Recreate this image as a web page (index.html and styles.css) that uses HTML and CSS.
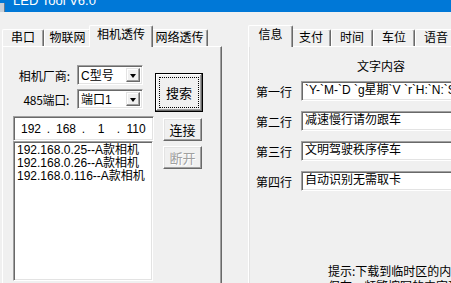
FILE: index.html
```html
<!DOCTYPE html>
<html>
<head>
<meta charset="utf-8">
<link rel="stylesheet" href="styles.css">
</head>
<body>
<div class="title">
  <span class="ticon"></span>
  <span class="ttext">LED Tool V6.0</span>
</div>
<div class="main">
  <div class="left">
    <div class="tabs">
      <div class="tab w42">串口</div>
      <div class="tab w47">物联网</div>
      <div class="tab sel w64">相机透传</div>
      <div class="tab w57">网络透传</div>
    </div>
    <div class="panel lpanel">
      <div class="lp-top">
        <div class="fields">
          <div class="frow">
            <span class="flabel">相机厂商:</span>
            <div class="combo sunken"><span class="cval">C型号</span><span class="cbtn"><span class="tri"></span></span></div>
          </div>
          <div class="frow">
            <span class="flabel">485端口:</span>
            <div class="combo sunken"><span class="cval">端口1</span><span class="cbtn"><span class="tri"></span></span></div>
          </div>
        </div>
        <div class="btn search"><span class="focus">搜索</span></div>
      </div>
      <div class="lp-mid">
        <div class="ip sunken">
          <span class="oct">192</span><span class="dot">.</span><span class="oct">168</span><span class="dot">.</span><span class="oct">1</span><span class="dot">.</span><span class="oct">110</span>
        </div>
        <div class="btn connect">连接</div>
      </div>
      <div class="lp-bot">
        <div class="list sunken">
          <div class="item">192.168.0.25--A款相机</div>
          <div class="item">192.168.0.26--A款相机</div>
          <div class="item">192.168.0.116--A款相机</div>
        </div>
        <div class="btn disconnect">断开</div>
      </div>
    </div>
  </div>
  <div class="right">
    <div class="tabs">
      <div class="tab sel w45">信息</div>
      <div class="tab w40">支付</div>
      <div class="tab w42">时间</div>
      <div class="tab w42">车位</div>
      <div class="tab w42">语音</div>
    </div>
    <div class="panel rpanel">
      <div class="rhead">文字内容</div>
      <div class="rrow"><span class="rlabel">第一行</span><div class="rinput sunken">`Y-`M-`D `g星期`V `r`H:`N:`S</div></div>
      <div class="rrow"><span class="rlabel">第二行</span><div class="rinput sunken">减速慢行请勿跟车</div></div>
      <div class="rrow"><span class="rlabel">第三行</span><div class="rinput sunken">文明驾驶秩序停车</div></div>
      <div class="rrow"><span class="rlabel">第四行</span><div class="rinput sunken">自动识别无需取卡</div></div>
      <div class="hint">提示:下载到临时区的内容不会保存，<br>保存，频繁擦写的内容建议</div>
    </div>
  </div>
</div>
</body>
</html>
```
FILE: styles.css
```css
* { box-sizing: border-box; }
html, body {
  margin: 0;
  padding: 0;
  width: 451px;
  height: 283px;
  overflow: hidden;
  background: #f0f0f0;
  font-family: "Liberation Sans", "Noto Sans CJK SC", sans-serif;
  font-size: 12px;
  color: #000;
}
.title {
  height: 12px;
  background: #0078d7;
  display: flex;
  align-items: flex-start;
  overflow: hidden;
}
.ticon {
  width: 5px;
  height: 9px;
  margin-top: 3px;
  background: #c8d0d8;
  border-right: 1px solid #6a7a8a;
}
.ttext {
  color: #fff;
  font-size: 13px;
  line-height: 15px;
  margin-top: -7px;
  margin-left: 8px;
}
.main {
  display: flex;
  align-items: flex-start;
}
.left {
  width: 222px;
  padding-left: 2px;
  padding-top: 13px;
  flex: none;
}
.right {
  margin-left: 26px;
  padding-top: 13px;
  width: 240px;
  flex: none;
}
.tabs {
  display: flex;
  height: 21px;
  align-items: flex-start;
  position: relative;
  z-index: 2;
}
.tab {
  height: 17px;
  margin-top: 4px;
  border-top: 1px solid #fff;
  border-left: 1px solid #fff;
  border-right: 1px solid #696969;
  box-shadow: inset -1px 0 #a0a0a0;
  border-radius: 2px 2px 0 0;
  text-align: center;
  line-height: 16px;
  flex: none;
  background: #f0f0f0;
}
.tab.sel {
  height: 22px;
  margin-top: 0;
  line-height: 19px;
  margin-left: -2px;
  margin-right: -2px;
  position: relative;
  z-index: 3;
}
.tabs .tab.sel:first-child { margin-left: 0; }
.w40 { width: 40px; }
.w42 { width: 42px; }
.w45 { width: 45px; }
.w47 { width: 47px; }
.w57 { width: 57px; }
.w64 { width: 64px; }
.panel {
  border-top: 1px solid #fff;
  border-left: 1px solid #fff;
  border-right: 1px solid #696969;
  box-shadow: inset -1px 0 #a0a0a0;
  position: relative;
  z-index: 1;
}
.lpanel {
  width: 220px;
  height: 240px;
  padding: 18px 0 0 10px;
}
.sunken {
  background: #fff;
  border: 1px solid;
  border-color: #a0a0a0 #fff #fff #a0a0a0;
  box-shadow: inset 1px 1px #696969, inset -1px -1px #e3e3e3;
}
.btn {
  background: #f0f0f0;
  border: 1px solid;
  border-color: #fff #696969 #696969 #fff;
  box-shadow: inset -1px -1px #a0a0a0, inset 1px 1px #e3e3e3;
  display: flex;
  align-items: center;
  justify-content: center;
  flex: none;
  font-family: "Noto Sans CJK SC", sans-serif;
}
.lp-top {
  display: flex;
  height: 47px;
}
.fields {
  width: 142px;
  display: flex;
  flex-direction: column;
  gap: 4px;
}
.frow {
  display: flex;
  align-items: center;
  height: 20px;
}
.flabel {
  width: 64px;
  text-align: right;
  padding-right: 7px;
  font-family: "Noto Sans CJK SC", sans-serif;
  white-space: nowrap;
}
.frow:nth-child(2) .flabel { padding-right: 8px; letter-spacing: -0.3px; }
.combo {
  width: 66px;
  height: 20px;
  display: flex;
  align-items: stretch;
  padding: 2px;
}
.cval {
  flex: 1;
  line-height: 16px;
  padding-left: 1px;
  font-family: "Liberation Sans", "Noto Sans CJK SC", sans-serif;
}
.cbtn {
  width: 14px;
  background: #f0f0f0;
  border: 1px solid;
  border-color: #e3e3e3 #696969 #696969 #e3e3e3;
  box-shadow: inset -1px -1px #a0a0a0, inset 1px 1px #fff;
  display: flex;
  align-items: center;
  justify-content: center;
}
.tri {
  width: 0;
  height: 0;
  border-left: 3.5px solid transparent;
  border-right: 3.5px solid transparent;
  border-top: 4px solid #000;
  margin-top: 1px;
}
.search {
  width: 48px;
  height: 39px;
  margin-top: 8px;
  border: 1px solid #000;
  box-shadow: inset -1px -1px #696969, inset 1px 1px #fff, inset -2px -2px #a0a0a0;
  padding: 3px;
  font-size: 13px;
}
.focus {
  width: 100%;
  height: 100%;
  border: 1px dotted #000;
  display: flex;
  align-items: center;
  justify-content: center;
}
.lp-mid {
  display: flex;
  margin-top: 4px;
}
.ip {
  width: 141px;
  height: 25px;
  display: flex;
  align-items: center;
  padding-left: 6px;
  font-family: "Liberation Sans", sans-serif;
}
.oct { width: 22px; text-align: center; }
.dot { width: 13px; text-align: center; }
.connect {
  width: 39px;
  height: 23px;
  margin-left: 9px;
  margin-top: 2px;
  font-size: 13px;
}
.lp-bot {
  display: flex;
}
.list {
  width: 140px;
  height: 140px;
  padding: 2px 0 0 3px;
}
.item {
  line-height: 13px;
  white-space: nowrap;
}
.disconnect {
  width: 39px;
  height: 23px;
  margin-left: 10px;
  margin-top: 5px;
  color: #a0a0a0;
  text-shadow: 1px 1px #fff;
  font-size: 13px;
}
.rpanel {
  width: 240px;
  height: 240px;
  border-right: none;
  box-shadow: inset 1px 0 #e3e3e3;
  padding: 12px 0 0 7px;
  font-family: "Noto Sans CJK SC", sans-serif;
}
.rhead {
  width: 250px;
  text-align: center;
  line-height: 13px;
  height: 22px;
}
.rrow {
  display: flex;
  align-items: center;
  height: 20px;
  margin-bottom: 10px;
}
.rlabel {
  width: 45px;
  flex: none;
}
.rinput {
  width: 200px;
  height: 20px;
  flex: none;
  padding-left: 3px;
  line-height: 17px;
  white-space: nowrap;
  overflow: hidden;
  font-family: "Liberation Sans", "Noto Sans CJK SC", sans-serif;
}
.hint {
  margin-top: 72px;
  margin-left: 72px;
  line-height: 15px;
  white-space: nowrap;
}
```
